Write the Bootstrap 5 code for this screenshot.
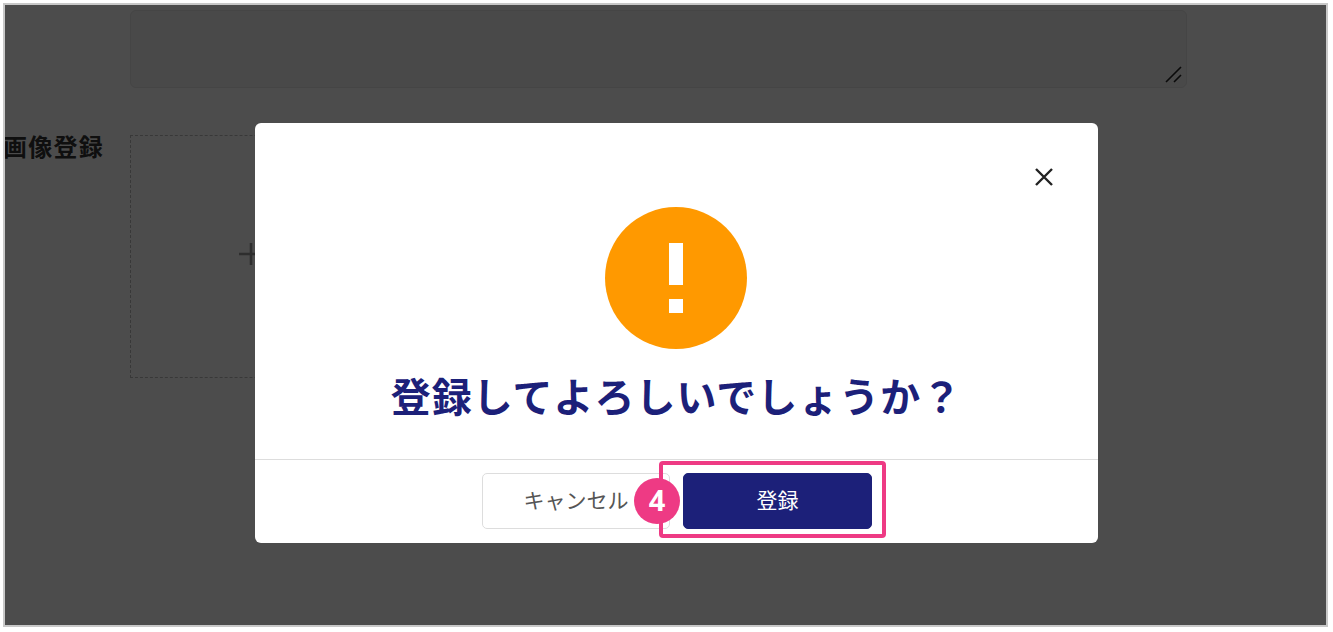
<!DOCTYPE html>
<html lang="ja">
<head>
<meta charset="utf-8">
<title>登録確認</title>
<link href="https://cdn.jsdelivr.net/npm/bootstrap@5.3.0/dist/css/bootstrap.min.css" rel="stylesheet">
<style>
html, body { height: 100%; background: #fff; overflow: hidden; }
body { font-family: "Liberation Sans", "Noto Sans CJK JP", sans-serif; }
.shot-frame { position: relative; width: 1325px; height: 624px; margin: 3px 0 0 3px; border: 2px solid #c8c8c8; background: #fff; overflow: hidden; color: #333; }
.form-area { padding: 5px 0 0 0; }
.memo-row { margin-left: 125px; width: 1057px; position: relative; }
.memo-box { height: 78px; resize: none; border-color: #e6e6e6; border-radius: 6px; background: #f6f6f6; display: block; }
.memo-grip { position: absolute; right: 4px; bottom: 4px; width: 18px; height: 18px; }
.photo-row { margin-top: 47px; }
.photo-label { width: 125px; font-size: 24px; font-weight: 700; line-height: 24px; padding-top: 1px; white-space: nowrap; color: #333; flex: none; letter-spacing: 1.25px; margin-left: -2px; margin-right: 2px; }
.photo-drop { width: 242px; height: 243px; border: 1.5px dashed #bdbdbd; }
.photo-plus { width: 24px; height: 24px; margin: 0 0 6px 0; }
.dim-layer { position: absolute; inset: 0; background: rgba(0,0,0,.7); padding: 118px 0 0 250px; }
.confirm-panel { width: 843px; height: 420px; border: 0; border-radius: 6px; overflow: hidden; }
.confirm-top { height: 336px; position: relative; }
.confirm-x { position: absolute; left: 778px; top: 43px; width: 22px; height: 22px; }
.warn-disc { width: 142px; height: 142px; border-radius: 50%; background: #ff9900; margin: 84px 1px 0 0; gap: 14px; }
.warn-bar { width: 14px; height: 42px; background: #fff; }
.warn-dot { width: 14px; height: 14px; background: #fff; }
.confirm-title { font-family: "Noto Sans CJK JP", sans-serif; font-size: 40px; font-weight: 700; color: #1c2079; letter-spacing: 1px; line-height: 50px; margin: 21px 0 0 0; white-space: nowrap; }
.confirm-foot { height: 84px; border-top: 1px solid #ddd; padding: 13px 0 0 227px; gap: 13px; position: relative; }
.act-btn { width: 188px; height: 56px; font-family: "Noto Sans CJK JP", sans-serif; font-size: 21px; line-height: 1; border-radius: 5px; padding: 0 0 3px 0; }
.act-cancel { background: #fff; border: 1px solid #ddd; color: #555; }
.act-save { background: #1c2079; border: 1px solid #1c2079; color: #fff; width: 189px; }
.mark-box { position: absolute; left: 404px; top: 1px; width: 227px; height: 77px; border: 4px solid #ee3a84; border-radius: 4px; pointer-events: none; }
.mark-num { position: absolute; left: 379px; top: 18px; width: 46px; height: 46px; border-radius: 50%; background: #ee3a84; color: #fff; font-family: "Open Sans", sans-serif; font-weight: 700; font-size: 29px; line-height: 43px; text-align: center; }
</style>
</head>
<body>
<div class="shot-frame">
  <div class="form-area">
    <div class="memo-row">
      <textarea class="form-control memo-box" aria-label="メモ"></textarea>
      <svg class="memo-grip" viewBox="0 0 18 18" aria-hidden="true"><path d="M1 16 16 1M9 16l7-7" stroke="#222" stroke-width="1.6" fill="none"/></svg>
    </div>
    <div class="d-flex photo-row">
      <div class="photo-label">画像登録</div>
      <div class="photo-drop d-flex align-items-center justify-content-center">
        <svg class="photo-plus" viewBox="0 0 24 24" aria-hidden="true"><path d="M12 1V23M0 12H24" stroke="#999" stroke-width="2.6" fill="none"/></svg>
      </div>
    </div>
  </div>
  <div class="dim-layer">
    <div class="card confirm-panel">
      <div class="confirm-top d-flex flex-column align-items-center">
        <svg class="confirm-x" viewBox="0 0 22 22" aria-label="閉じる"><path d="M3 3 19 19M19 3 3 19" stroke="#222" stroke-width="2.4" fill="none"/></svg>
        <div class="warn-disc d-flex flex-column align-items-center justify-content-center">
          <div class="warn-bar"></div>
          <div class="warn-dot"></div>
        </div>
        <h1 class="confirm-title">登録してよろしいでしょうか？</h1>
      </div>
      <div class="confirm-foot d-flex">
        <button type="button" class="btn act-btn act-cancel">キャンセル</button>
        <button type="button" class="btn act-btn act-save">登録</button>
        <div class="mark-box"></div>
        <div class="mark-num">4</div>
      </div>
    </div>
  </div>
</div>
<script src="https://cdn.jsdelivr.net/npm/bootstrap@5.3.0/dist/js/bootstrap.bundle.min.js"></script>
</body>
</html>
